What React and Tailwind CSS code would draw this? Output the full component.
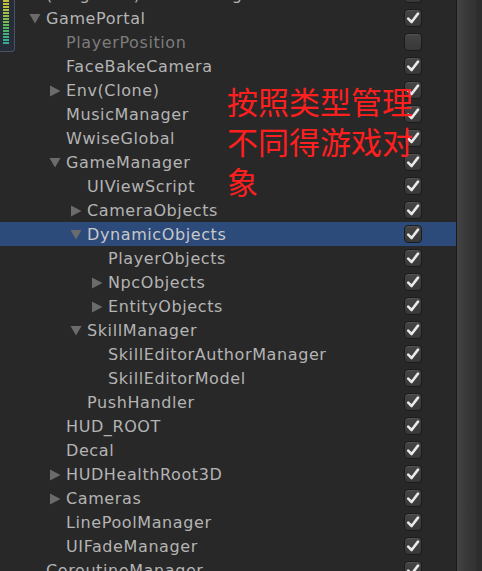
import React from "react";

const rows = [
  { l: 0, a: null, t: "(Singleton)TraceManager", c: true },
  { l: 0, a: "d", t: "GamePortal", c: true },
  { l: 1, a: null, t: "PlayerPosition", c: false, dim: true },
  { l: 1, a: null, t: "FaceBakeCamera", c: true },
  { l: 1, a: "r", t: "Env(Clone)", c: true },
  { l: 1, a: null, t: "MusicManager", c: true },
  { l: 1, a: null, t: "WwiseGlobal", c: true },
  { l: 1, a: "d", t: "GameManager", c: true },
  { l: 2, a: null, t: "UIViewScript", c: true },
  { l: 2, a: "r", t: "CameraObjects", c: true },
  { l: 2, a: "d", t: "DynamicObjects", c: true, sel: true },
  { l: 3, a: null, t: "PlayerObjects", c: true },
  { l: 3, a: "r", t: "NpcObjects", c: true },
  { l: 3, a: "r", t: "EntityObjects", c: true },
  { l: 2, a: "d", t: "SkillManager", c: true },
  { l: 3, a: null, t: "SkillEditorAuthorManager", c: true },
  { l: 3, a: null, t: "SkillEditorModel", c: true },
  { l: 2, a: null, t: "PushHandler", c: true },
  { l: 1, a: null, t: "HUD_ROOT", c: true },
  { l: 1, a: null, t: "Decal", c: true },
  { l: 1, a: "r", t: "HUDHealthRoot3D", c: true },
  { l: 1, a: "r", t: "Cameras", c: true },
  { l: 1, a: null, t: "LinePoolManager", c: true },
  { l: 1, a: null, t: "UIFadeManager", c: true },
  { l: 0, a: null, t: "CoroutineManager", c: true },
];

const indent = ["w-[46px]", "w-[66px]", "w-[87px]", "w-[108px]"];

function Arrow({ dir }) {
  if (dir === "d")
    return (
      <svg width="12" height="12" viewBox="0 0 12 12" className="absolute right-[5px] top-[7px]">
        <polygon points="0.5,1 11.5,1 6,10.5" fill="#6b6b6b" />
      </svg>
    );
  return (
    <svg width="12" height="12" viewBox="0 0 12 12" className="absolute right-[5px] top-[7px]">
      <polygon points="1,0.5 11.5,6 1,11.5" fill="#6b6b6b" />
    </svg>
  );
}

function Check({ on }) {
  return (
    <div className="w-[18px] h-[18px] rounded-[4px] border border-[#1b1b1b] bg-gradient-to-b from-[#454545] to-[#383838] shadow-[inset_0_1px_0_rgba(255,255,255,0.08)] flex items-center justify-center">
      {on && (
        <svg width="16" height="16" viewBox="0 0 16 16">
          <path d="M3.2 8.6 L6.6 12 L13 3.6" stroke="#e8e8e8" strokeWidth="2.6" fill="none" strokeLinecap="round" strokeLinejoin="round" />
        </svg>
      )}
    </div>
  );
}

function Meter() {
  const bars = [];
  const colors = [
    "#c9bd3a", "#c4bf3c", "#bcc03e", "#b0c040", "#a2c043", "#94bf46", "#84bd4a",
    "#72bb4f", "#62b957", "#55b660", "#4ab46b", "#42b277", "#3cb083", "#38ae8e", "#36ab97",
  ];
  for (let i = 0; i < colors.length; i++) {
    bars.push(<div key={i} className="h-[2px] mb-[1px] w-full" style={{ background: colors[i] }} />);
  }
  return (
    <div className="absolute left-0 top-0 w-[15px] h-[52px] bg-[#262c38] border-r border-b border-[#4b5263] rounded-br-[4px] pt-0 pl-[3px] pr-[5px]">
      <div className="w-[6px] flex flex-col">{bars}</div>
    </div>
  );
}

export default function App() {
  return (
    <div className="relative w-[482px] h-[571px] overflow-hidden bg-[#282828] flex" style={{ fontFamily: '"DejaVu Sans", sans-serif' }}>
      <div className="flex-1 flex flex-col -mt-[18px]">
        {rows.map((r, i) => (
          <div key={i} className={"h-[24px] shrink-0 flex items-center " + (r.sel ? "bg-[#2c4a7a]" : "")}>
            <div className={"relative h-[24px] shrink-0 " + indent[r.l]}>
              {r.a && <Arrow dir={r.a} />}
            </div>
            <div className={"flex-1 pt-[1px] text-[16px] leading-[24px] tracking-[0.6px] whitespace-nowrap " + (r.dim ? "text-[#7c7c7c]" : r.sel ? "text-[#c8c8c8]" : "text-[#b4b4b4]")}>
              {r.t}
            </div>
            <div className="mr-[34px]">
              <Check on={r.c} />
            </div>
          </div>
        ))}
      </div>
      <div className="w-[26px] h-full flex shrink-0">
        <div className="w-[1px] bg-[#1a1a1a]" />
        <div className="w-[19px] bg-gradient-to-r from-[#444444] via-[#383838] to-[#333333]" />
        <div className="w-[6px] bg-[#2d2d2d]" />
      </div>
      <Meter />
      <div
        className="absolute left-[227px] top-[81px] text-[31px] leading-[40px] text-[#ff1f1f]"
        style={{ fontFamily: '"Noto Sans CJK SC", sans-serif' }}
      >
        <div>按照类型管理</div>
        <div>不同得游戏对</div>
        <div>象</div>
      </div>
    </div>
  );
}
